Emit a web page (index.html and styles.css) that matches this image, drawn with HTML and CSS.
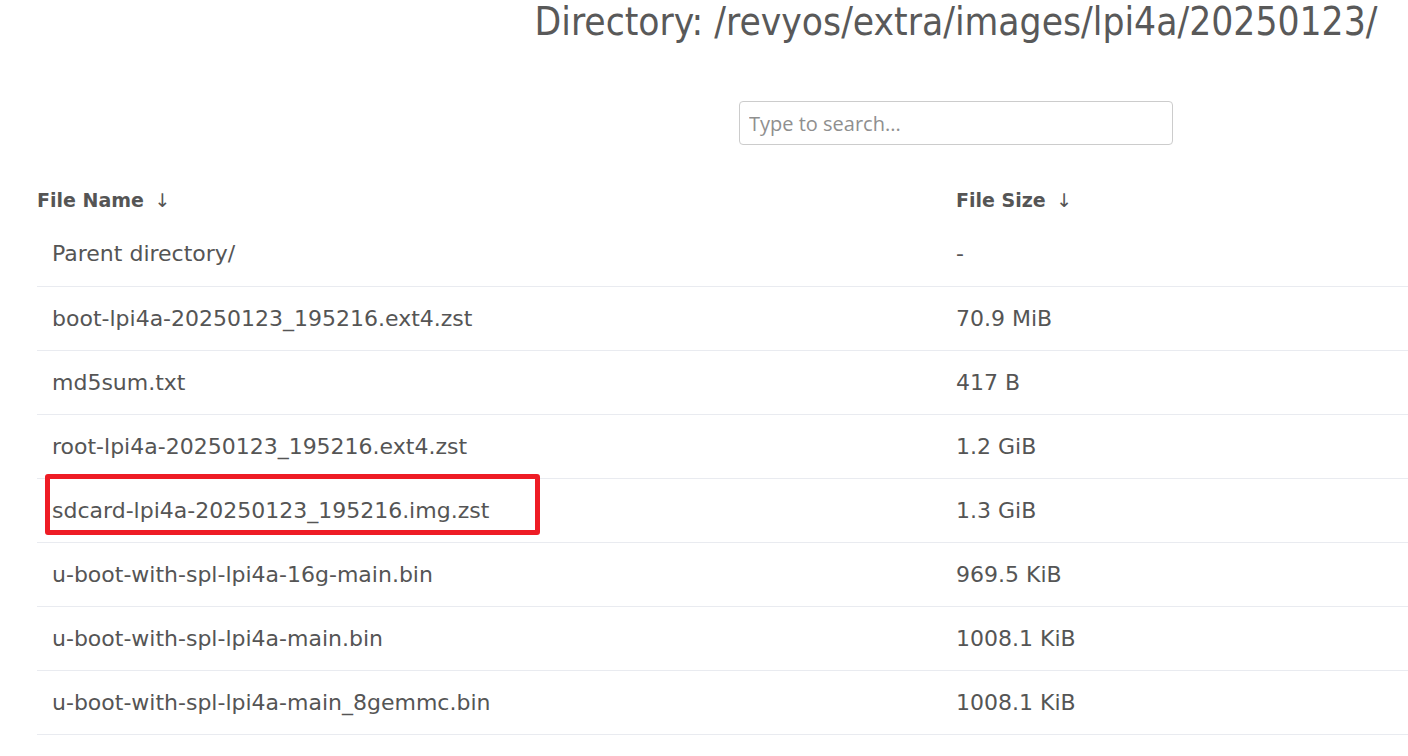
FILE: index.html
```html
<!DOCTYPE html>
<html>
<head>
<meta charset="utf-8">
<title>Directory listing</title>
<link rel="stylesheet" href="styles.css">
</head>
<body>
<div class="page">
  <h1 class="title">Directory: /revyos/extra/images/lpi4a/20250123/</h1>
  <div class="search-wrap">
    <input class="search" type="text" placeholder="Type to search...">
  </div>
  <table class="listing">
    <thead>
      <tr>
        <th class="col-name">File Name <span class="arrow">↓</span></th>
        <th class="col-size">File Size <span class="arrow">↓</span></th>
      </tr>
    </thead>
    <tbody>
      <tr class="first"><td class="name">Parent directory/</td><td class="size">-</td></tr>
      <tr><td class="name">boot-lpi4a-20250123_195216.ext4.zst</td><td class="size">70.9 MiB</td></tr>
      <tr><td class="name">md5sum.txt</td><td class="size">417 B</td></tr>
      <tr><td class="name">root-lpi4a-20250123_195216.ext4.zst</td><td class="size">1.2 GiB</td></tr>
      <tr><td class="name marked">sdcard-lpi4a-20250123_195216.img.zst<span class="highlight"></span></td><td class="size">1.3 GiB</td></tr>
      <tr><td class="name">u-boot-with-spl-lpi4a-16g-main.bin</td><td class="size">969.5 KiB</td></tr>
      <tr><td class="name">u-boot-with-spl-lpi4a-main.bin</td><td class="size">1008.1 KiB</td></tr>
      <tr><td class="name">u-boot-with-spl-lpi4a-main_8gemmc.bin</td><td class="size">1008.1 KiB</td></tr>
    </tbody>
  </table>
</div>
</body>
</html>
```

FILE: styles.css
```css
html, body {
  margin: 0;
  padding: 0;
  background: #ffffff;
  overflow: hidden;
}

body {
  font-family: "DejaVu Sans", Verdana, sans-serif;
  color: #555555;
}

.page {
  width: 1912px;
}

.title {
  margin: 0;
  text-align: center;
  font-family: "DejaVu Sans Condensed", "DejaVu Sans", sans-serif;
  font-stretch: condensed;
  font-weight: normal;
  font-size: 38.6px;
  line-height: 44px;
  color: #595959;
}

.search-wrap {
  display: flex;
  justify-content: center;
  margin-top: 57px;
}

.search {
  box-sizing: border-box;
  width: 434px;
  height: 44px;
  border: 1px solid #cccccc;
  border-radius: 4px;
  padding: 0 9px;
  font-family: "Open Sans", "Segoe UI", sans-serif;
  font-size: 20px;
  color: #555555;
  outline: none;
}

.search::placeholder {
  color: #8f8f8f;
}

.listing {
  margin: 36px 37px 0 37px;
  width: 1838px;
  border-collapse: collapse;
  table-layout: fixed;
}

.listing th {
  text-align: left;
  font-weight: bold;
  font-size: 19px;
  height: 38px;
  padding: 0;
  vertical-align: middle;
  color: #555555;
}

.arrow {
  font-weight: normal;
  margin-left: 4px;
}

.listing td {
  height: 63px;
  padding: 0;
  font-size: 22px;
  vertical-align: middle;
  border-top: 1px solid #e9ebf0;
}

.listing tr.first td {
  border-top: none;
  height: 67px;
  padding-top: 3px;
  box-sizing: border-box;
}

.listing tbody tr:last-child td {
  border-bottom: 1px solid #e9ebf0;
}

.listing td.name {
  padding-left: 15px;
}

.marked {
  position: relative;
}

.highlight {
  position: absolute;
  left: 8px;
  top: -5px;
  width: 495px;
  height: 61px;
  border: 5px solid #ee1c25;
  border-radius: 3px;
  box-sizing: border-box;
}
```
